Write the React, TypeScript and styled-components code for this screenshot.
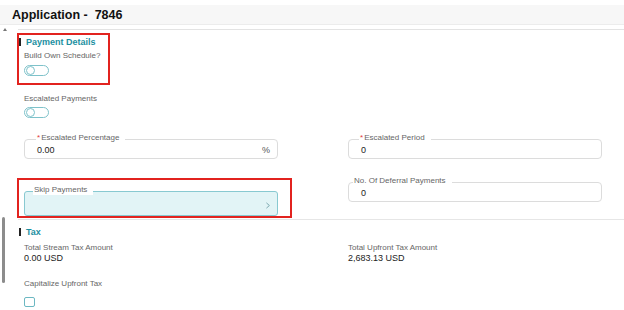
import React from 'react';
import styled, { createGlobalStyle } from 'styled-components';

const GlobalStyle = createGlobalStyle`
  body {
    margin: 0;
    font-family: 'Liberation Sans', Arial, sans-serif;
    background: #fff;
  }
`;

const Page = styled.div`
  width: 624px;
  height: 310px;
  overflow: hidden;
  background: #fff;
`;

const Header = styled.div`
  margin-top: 5px;
  height: 19px;
  background: #f7f7f7;
  border-bottom: 1px solid #ececec;
  padding-left: 12px;
  display: flex;
  align-items: center;
`;

const Title = styled.h1`
  margin: 0;
  font-size: 12.5px;
  font-weight: 700;
  color: #111;
  white-space: pre;
`;

const Body = styled.div`
  display: flex;
  height: 285px;
`;

const Gutter = styled.div`
  width: 18px;
  display: flex;
  flex-direction: column;
  align-items: flex-start;
  padding-left: 2px;
  box-sizing: border-box;
`;

const ScrollArrow = styled.div`
  margin-top: 3px;
  margin-left: 0.5px;
  width: 0;
  height: 0;
  border-left: 2px solid transparent;
  border-right: 2px solid transparent;
  border-bottom: 3px solid #777;
`;

const ScrollThumb = styled.div`
  margin-top: 186px;
  width: 3px;
  height: 66px;
  border-radius: 2px;
  background: #8c8c8c;
`;

const Content = styled.div`
  flex: 1;
  margin-top: 4px;
  border-top: 1px solid #e3e3e3;
`;

const Section = styled.section<{ $divider?: boolean; $gap?: number }>`
  margin-top: ${({ $gap }) => $gap ?? 0}px;
  padding: 0 22px 0 6px;
  ${({ $divider }) => $divider && 'border-top: 1px solid #e6e6e6;'}
`;

const SectionTitle = styled.div`
  margin: 7px 0 0 -5px;
  height: 9px;
  display: flex;
  align-items: center;
  gap: 5px;
  font-size: 9px;
  font-weight: 700;
  color: #1c8fa1;
  &::before {
    content: '';
    width: 2px;
    height: 8px;
    background: #222;
  }
`;

const Highlight = styled.div<{ $l: number; $t: number; $w: number; $h: number; $gap?: number }>`
  position: relative;
  margin-top: ${({ $gap }) => $gap ?? 0}px;
  &::after {
    content: '';
    position: absolute;
    left: ${({ $l }) => $l}px;
    top: ${({ $t }) => $t}px;
    width: ${({ $w }) => $w}px;
    height: ${({ $h }) => $h}px;
    box-sizing: border-box;
    border: 2px solid #e2231f;
    pointer-events: none;
  }
`;

const Label = styled.div<{ $gap?: number }>`
  margin-top: ${({ $gap }) => $gap ?? 0}px;
  font-size: 8px;
  line-height: 10px;
  color: #666;
`;

const Value = styled.div`
  font-size: 9px;
  line-height: 10px;
  color: #222;
`;

const Toggle = styled.div<{ $gap: number }>`
  margin-top: ${({ $gap }) => $gap}px;
  width: 25px;
  height: 11px;
  box-sizing: border-box;
  border: 1.5px solid #7ec2ca;
  border-radius: 6px;
  display: flex;
  align-items: center;
  padding-left: 1px;
  &::before {
    content: '';
    width: 7px;
    height: 7px;
    border-radius: 50%;
    border: 1.2px solid #7ec2ca;
    background: #fff;
  }
`;

const FieldGrid = styled.div`
  margin-top: 21px;
  display: grid;
  grid-template-columns: 254px 254px;
  column-gap: 70px;
  row-gap: 23px;
  align-items: start;
`;

const Field = styled.div<{ $tall?: boolean; $filled?: boolean }>`
  position: relative;
  height: ${({ $tall }) => ($tall ? 25 : 20)}px;
  box-sizing: border-box;
  border: 1px solid ${({ $filled }) => ($filled ? '#88c9d1' : '#dcdcdc')};
  border-radius: ${({ $filled }) => ($filled ? 3 : 4)}px;
  background: ${({ $filled }) => ($filled ? '#e2f4f6' : '#fff')};
  display: flex;
  align-items: center;
  justify-content: space-between;
  padding: 1px 7px 0 12px;
`;

const FieldLabel = styled.span<{ $left: number }>`
  position: absolute;
  left: ${({ $left }) => $left}px;
  top: -7px;
  padding: 0 6px 0 1px;
  background: #fff;
  font-size: 8px;
  line-height: 10px;
  color: #666;
  white-space: nowrap;
`;

const Required = styled.span`
  color: #e23a3a;
  margin-right: 1px;
`;

const FieldValue = styled.span`
  font-size: 9px;
  color: #222;
`;

const Suffix = styled.span`
  font-size: 9px;
  color: #555;
`;

const Chevron = styled.svg`
  width: 6px;
  height: 7px;
  margin-top: 3px;
  margin-right: -1px;
`;

const TaxGrid = styled.div`
  margin-top: 7px;
  display: grid;
  grid-template-columns: 324px 1fr;
`;

const Checkbox = styled.div`
  margin-top: 8px;
  width: 11px;
  height: 10px;
  box-sizing: border-box;
  border: 1.5px solid #6cb8c2;
  border-radius: 2px;
`;

export default function App() {
  return (
    <Page>
      <GlobalStyle />
      <Header>
        <Title>{'Application -  7846'}</Title>
      </Header>
      <Body>
        <Gutter>
          <ScrollArrow />
          <ScrollThumb />
        </Gutter>
        <Content>
          <Section>
            <Highlight $l={-7} $t={-4} $w={93} $h={52}>
              <SectionTitle>Payment Details</SectionTitle>
              <Label $gap={5}>Build Own Schedule?</Label>
              <Toggle $gap={4} />
            </Highlight>
            <Label $gap={18}>Escalated Payments</Label>
            <Toggle $gap={3} />

            <FieldGrid>
              <Field>
                <FieldLabel $left={11}>
                  <Required>*</Required>Escalated Percentage
                </FieldLabel>
                <FieldValue>0.00</FieldValue>
                <Suffix>%</Suffix>
              </Field>
              <Field>
                <FieldLabel $left={10}>
                  <Required>*</Required>Escalated Period
                </FieldLabel>
                <FieldValue>0</FieldValue>
              </Field>
              <Highlight $l={-7} $t={-13} $w={275} $h={40} $gap={9}>
                <Field $tall $filled>
                  <FieldLabel $left={8}>Skip Payments</FieldLabel>
                  <span />
                  <Chevron viewBox="0 0 6 8">
                    <path d="M1.2 1 L4.6 4 L1.2 7" fill="none" stroke="#6f9ea6" strokeWidth="1" />
                  </Chevron>
                </Field>
              </Highlight>
              <Field>
                <FieldLabel $left={4}>No. Of Deferral Payments</FieldLabel>
                <FieldValue>0</FieldValue>
              </Field>
            </FieldGrid>
          </Section>

          <Section $divider $gap={3}>
            <SectionTitle>Tax</SectionTitle>
            <TaxGrid>
              <div>
                <Label>Total Stream Tax Amount</Label>
                <Value>0.00 USD</Value>
              </div>
              <div>
                <Label>Total Upfront Tax Amount</Label>
                <Value>2,683.13 USD</Value>
              </div>
            </TaxGrid>
            <Label $gap={16}>Capitalize Upfront Tax</Label>
            <Checkbox />
          </Section>
        </Content>
      </Body>
    </Page>
  );
}
